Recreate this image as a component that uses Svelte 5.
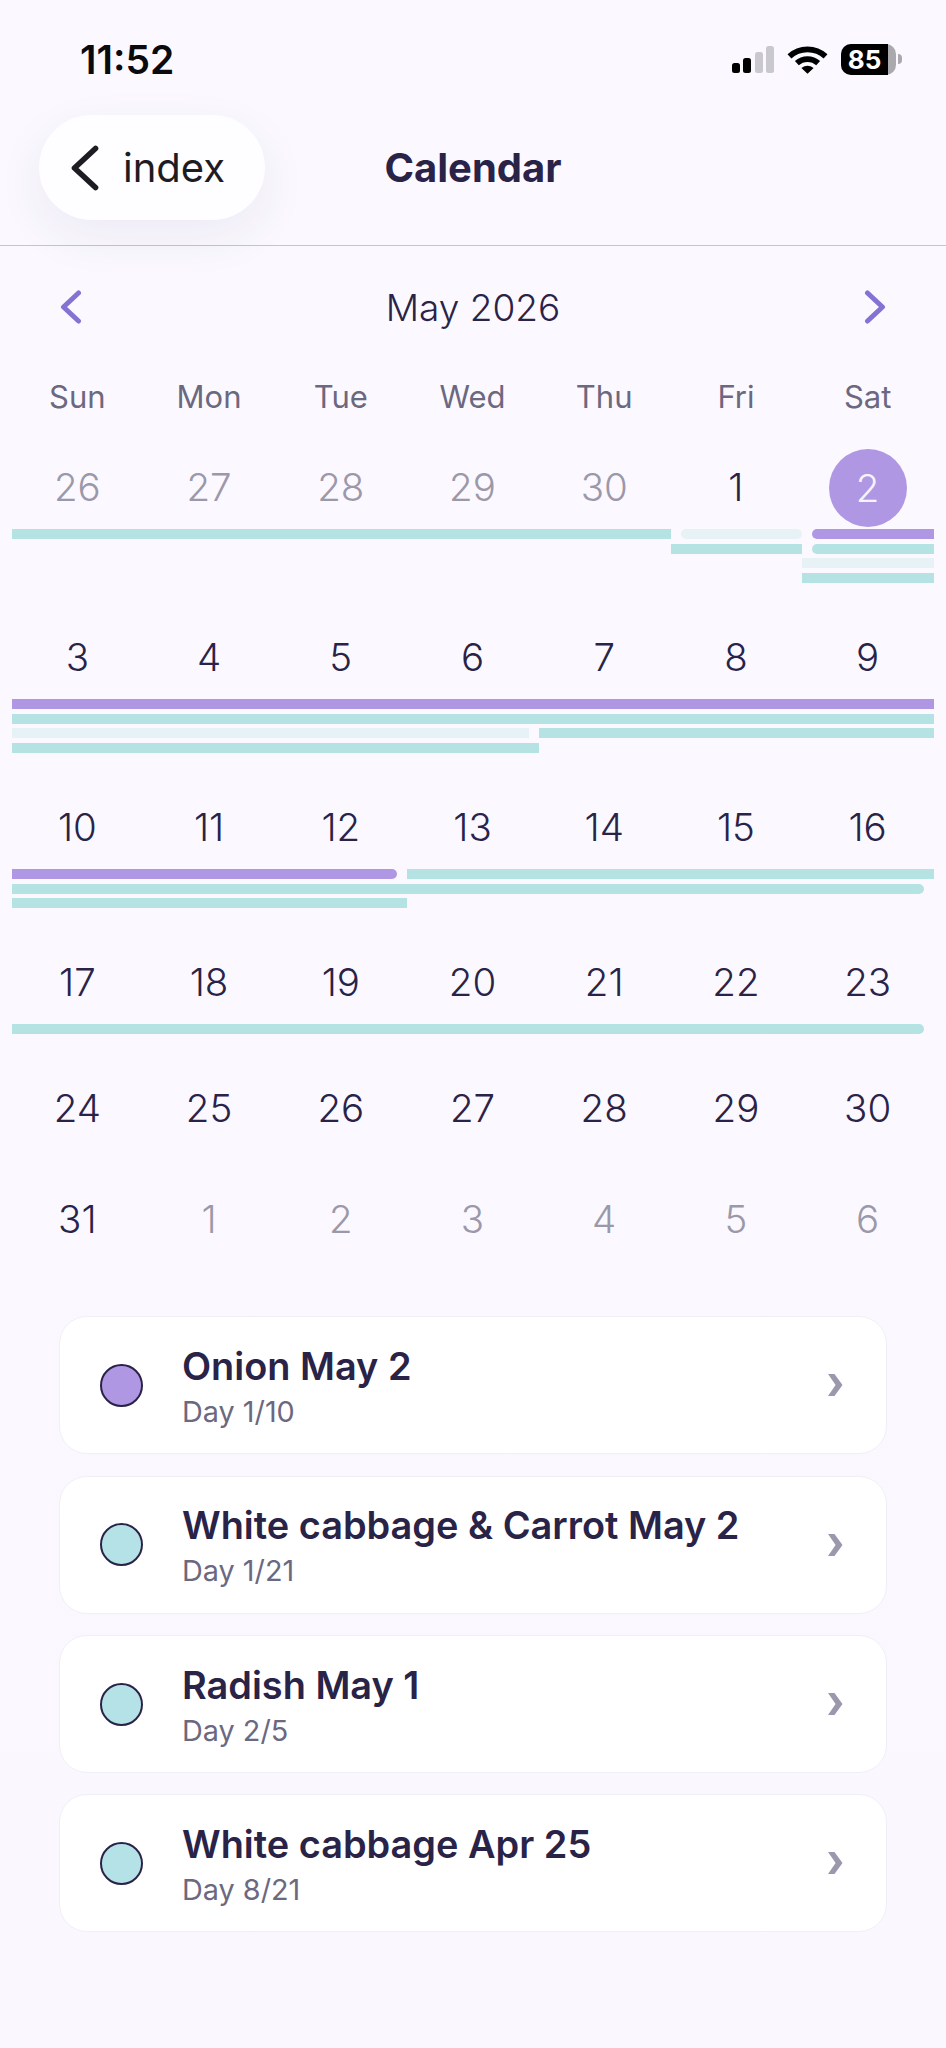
<script lang="ts">
	type Bar = {
		col: number;
		span: number;
		row: number;
		kind: 'purple' | 'teal' | 'pale';
		start?: boolean;
		end?: boolean;
		round?: boolean;
		trim?: boolean;
	};

	const weekdays = ['Sun', 'Mon', 'Tue', 'Wed', 'Thu', 'Fri', 'Sat'];

	const weeks: { days: { n: number; muted?: boolean; selected?: boolean }[]; bars: Bar[] }[] = [
		{
			days: [
				{ n: 26, muted: true },
				{ n: 27, muted: true },
				{ n: 28, muted: true },
				{ n: 29, muted: true },
				{ n: 30, muted: true },
				{ n: 1 },
				{ n: 2, selected: true }
			],
			bars: [
				{ col: 1, span: 5, row: 1, kind: 'teal' },
				{ col: 6, span: 1, row: 1, kind: 'pale', start: true, round: true },
				{ col: 7, span: 1, row: 1, kind: 'purple', start: true },
				{ col: 6, span: 1, row: 2, kind: 'teal' },
				{ col: 7, span: 1, row: 2, kind: 'teal', start: true },
				{ col: 7, span: 1, row: 3, kind: 'pale' },
				{ col: 7, span: 1, row: 4, kind: 'teal' }
			]
		},
		{
			days: [3, 4, 5, 6, 7, 8, 9].map((n) => ({ n })),
			bars: [
				{ col: 1, span: 7, row: 1, kind: 'purple' },
				{ col: 1, span: 7, row: 2, kind: 'teal' },
				{ col: 1, span: 4, row: 3, kind: 'pale', trim: true },
				{ col: 5, span: 3, row: 3, kind: 'teal' },
				{ col: 1, span: 4, row: 4, kind: 'teal' }
			]
		},
		{
			days: [10, 11, 12, 13, 14, 15, 16].map((n) => ({ n })),
			bars: [
				{ col: 1, span: 3, row: 1, kind: 'purple', end: true },
				{ col: 4, span: 4, row: 1, kind: 'teal' },
				{ col: 1, span: 7, row: 2, kind: 'teal', end: true },
				{ col: 1, span: 3, row: 3, kind: 'teal' }
			]
		},
		{
			days: [17, 18, 19, 20, 21, 22, 23].map((n) => ({ n })),
			bars: [{ col: 1, span: 7, row: 1, kind: 'teal', end: true }]
		},
		{ days: [24, 25, 26, 27, 28, 29, 30].map((n) => ({ n })), bars: [] },
		{
			days: [
				{ n: 31 },
				{ n: 1, muted: true },
				{ n: 2, muted: true },
				{ n: 3, muted: true },
				{ n: 4, muted: true },
				{ n: 5, muted: true },
				{ n: 6, muted: true }
			],
			bars: []
		}
	];

	const plans = [
		{ name: 'Onion May 2', day: 'Day 1/10', purple: true },
		{ name: 'White cabbage & Carrot May 2', day: 'Day 1/21' },
		{ name: 'Radish May 1', day: 'Day 2/5' },
		{ name: 'White cabbage Apr 25', day: 'Day 8/21' }
	];

	const battery = 85;
</script>

<div class="page">
	<header class="top">
		<div class="status">
			<span class="time">11:52</span>
			<div class="status-icons">
				<div class="signal">
					<i class="on s1"></i>
					<i class="on s2"></i>
					<i class="s3"></i>
					<i class="s4"></i>
				</div>
				<svg class="wifi" viewBox="0 0 40 28" width="41" height="29" aria-hidden="true">
					<path d="M2.4 11 A26 26 0 0 1 37.6 11" fill="none" stroke="#000" stroke-width="5.6" />
					<path d="M9.6 17.6 A15.5 15.5 0 0 1 30.4 17.6" fill="none" stroke="#000" stroke-width="5.6" />
					<path d="M14 22.4 Q20 17.6 26 22.4 L20 28 Z" fill="#000" />
				</svg>
				<div class="battery">
					<div class="battery-fill" style="width: {battery}%"></div>
					<span class="battery-text">{battery}</span>
				</div>
			</div>
		</div>
		<nav class="nav">
			<button class="back" type="button">
				<svg viewBox="0 0 28 46" width="28" height="46" aria-hidden="true">
					<path d="M24.5 3.5 L3.5 23 L24.5 42.5" fill="none" stroke="#1c1c22" stroke-width="5.6" stroke-linecap="round" stroke-linejoin="round" />
				</svg>
				<span>index</span>
			</button>
			<h1>Calendar</h1>
		</nav>
	</header>

	<section class="calendar">
		<div class="month">
			<svg viewBox="0 0 22 34" width="22" height="34" aria-hidden="true">
				<path d="M18.5 3 L3.5 17 L18.5 31" fill="none" stroke="#8373d2" stroke-width="5" stroke-linecap="round" stroke-linejoin="round" />
			</svg>
			<span>May 2026</span>
			<svg viewBox="0 0 22 34" width="22" height="34" aria-hidden="true">
				<path d="M3.5 3 L18.5 17 L3.5 31" fill="none" stroke="#8373d2" stroke-width="5" stroke-linecap="round" stroke-linejoin="round" />
			</svg>
		</div>

		<div class="weekdays">
			{#each weekdays as d}
				<span>{d}</span>
			{/each}
		</div>

		{#each weeks as week}
			<div class="week">
				<div class="days">
					{#each week.days as day}
						<div class="day" class:muted={day.muted} class:selected={day.selected}>
							<span>{day.n}</span>
						</div>
					{/each}
				</div>
				{#if week.bars.length}
					<div class="bars">
						{#each week.bars as bar}
							<div
								class="bar {bar.kind}"
								class:start={bar.start}
								class:end={bar.end}
								class:round={bar.round}
								class:trim={bar.trim}
								style="grid-column: {bar.col} / span {bar.span}; grid-row: {bar.row}"
							></div>
						{/each}
					</div>
				{/if}
			</div>
		{/each}
	</section>

	<section class="plans">
		{#each plans as plan}
			<div class="plan">
				<span class="dot" class:purple={plan.purple}></span>
				<div class="plan-text">
					<div class="plan-name">{plan.name}</div>
					<div class="plan-day">{plan.day}</div>
				</div>
				<svg viewBox="0 0 16 24" width="16" height="24" aria-hidden="true">
					<path d="M1 1 H7.5 L15.5 12 L7.5 23 H1 L8.6 12 Z" fill="#9b98ae" />
				</svg>
			</div>
		{/each}
	</section>
</div>

<style>
	:global(body) {
		background: #faf8fe;
	}

	.page {
		height: 2048px;
		overflow: hidden;
		background: linear-gradient(#fbf9ff, #fbf9ff 40%, #faf8fe);
		font-family: Inter, 'Liberation Sans', sans-serif;
		color: #2a2348;
	}

	.top {
		height: 245px;
		border-bottom: 1px solid #c6c4cd;
	}

	.status {
		height: 115px;
		display: flex;
		justify-content: space-between;
		align-items: flex-start;
		padding: 38px 44px 0 80px;
		box-sizing: border-box;
	}

	.time {
		font-size: 39px;
		font-weight: 600;
		line-height: 44px;
		color: #0b0b0f;
	}

	.status-icons {
		display: flex;
		align-items: center;
		gap: 13px;
		margin-top: 6px;
	}

	.signal {
		display: flex;
		align-items: flex-end;
		gap: 3.5px;
		height: 27px;
	}

	.signal i {
		width: 8px;
		border-radius: 2.5px;
		background: #c9c8ce;
	}

	.signal .on {
		background: #000;
	}

	.s1 {
		height: 10px;
	}

	.s2 {
		height: 15px;
	}

	.s3 {
		height: 21px;
	}

	.s4 {
		height: 27px;
	}

	.battery {
		position: relative;
		width: 55px;
		height: 31px;
		border-radius: 10px;
		background: #aaa9ad;
		margin-right: 6px;
	}

	.battery::after {
		content: '';
		position: absolute;
		left: 57px;
		top: 10px;
		width: 4px;
		height: 10px;
		border-radius: 0 5px 5px 0;
		background: #aaa9ad;
	}

	.battery-fill {
		height: 100%;
		background: #000;
		border-radius: 10px 0 0 10px;
	}

	.battery-text {
		position: absolute;
		left: 0;
		top: 0;
		width: 47px;
		text-align: center;
		color: #fff;
		font-size: 26px;
		font-weight: 700;
		line-height: 31px;
	}

	.nav {
		display: grid;
		grid-template-columns: 1fr auto 1fr;
		align-items: center;
		padding: 0 39px;
	}

	.back {
		justify-self: start;
		width: 226px;
		height: 105px;
		display: flex;
		align-items: center;
		gap: 24px;
		padding: 0 0 0 32px;
		box-sizing: border-box;
		border: none;
		border-radius: 53px;
		background: #fefdff;
		box-shadow: 0 16px 48px rgba(40, 30, 80, 0.07);
		font: inherit;
		font-size: 40px;
		color: #1c1c22;
	}

	h1 {
		margin: 0;
		font-size: 40px;
		font-weight: 700;
		color: #2a2348;
	}

	.month {
		height: 122px;
		display: flex;
		align-items: center;
		justify-content: space-between;
		padding: 0 60px;
		font-size: 37px;
		font-weight: 300;
	}

	.weekdays,
	.days,
	.bars {
		display: grid;
		grid-template-columns: repeat(7, 1fr);
		margin: 0 12px;
	}

	.weekdays {
		height: 56px;
		margin-bottom: 25px;
		align-items: center;
		text-align: center;
		font-size: 31px;
		color: #6b6880;
	}

	.weekdays span {
		padding-right: 1px;
	}

	.week {
		min-height: 111px;
	}

	.days {
		margin-bottom: 2px;
	}

	.day {
		height: 78px;
		box-sizing: border-box;
		padding: 0 1px 2px 0;
		display: flex;
		align-items: center;
		justify-content: center;
		font-size: 38.5px;
		font-weight: 300;
	}

	.day.muted {
		color: #9b98a9;
	}

	.day.selected {
		padding: 0 1px 0 0;
	}

	.day.selected span {
		width: 78px;
		height: 78px;
		display: flex;
		align-items: center;
		justify-content: center;
		border-radius: 50%;
		background: #b097e3;
		color: #f6f2ff;
	}

	.bars {
		grid-auto-rows: 10px;
		row-gap: 4.67px;
		padding-bottom: 36px;
	}

	.bar {
		min-width: 0;
	}

	.bar.purple {
		background: #b097e3;
	}

	.bar.teal {
		background: #b5e2e3;
	}

	.bar.pale {
		background: #e6f2f6;
	}

	.bar.start {
		margin-left: 10px;
		border-top-left-radius: 6px;
		border-bottom-left-radius: 6px;
	}

	.bar.end {
		margin-right: 10px;
		border-top-right-radius: 6px;
		border-bottom-right-radius: 6px;
	}

	.bar.round {
		border-top-right-radius: 6px;
		border-bottom-right-radius: 6px;
	}

	.bar.trim {
		margin-right: 10px;
	}

	.plans {
		display: flex;
		flex-direction: column;
		gap: 21.4px;
		padding: 24px 59px 0;
	}

	.plan {
		height: 138px;
		flex-shrink: 0;
		box-sizing: border-box;
		display: flex;
		align-items: center;
		padding: 0 43px 0 40px;
		background: #fff;
		border: 1px solid #f1eff6;
		border-radius: 28px;
	}

	.dot {
		width: 43px;
		height: 43px;
		box-sizing: border-box;
		flex-shrink: 0;
		border: 2.5px solid #2a2348;
		border-radius: 50%;
		background: #b5e2e6;
	}

	.dot.purple {
		background: #b097e3;
	}

	.plan-text {
		flex: 1;
		margin-left: 39px;
		padding-top: 2px;
	}

	.plan-name {
		font-size: 37.9px;
		font-weight: 600;
		line-height: 46px;
	}

	.plan-day {
		font-size: 28.8px;
		line-height: 36px;
		margin-top: 5px;
		color: #6b6880;
	}
</style>
